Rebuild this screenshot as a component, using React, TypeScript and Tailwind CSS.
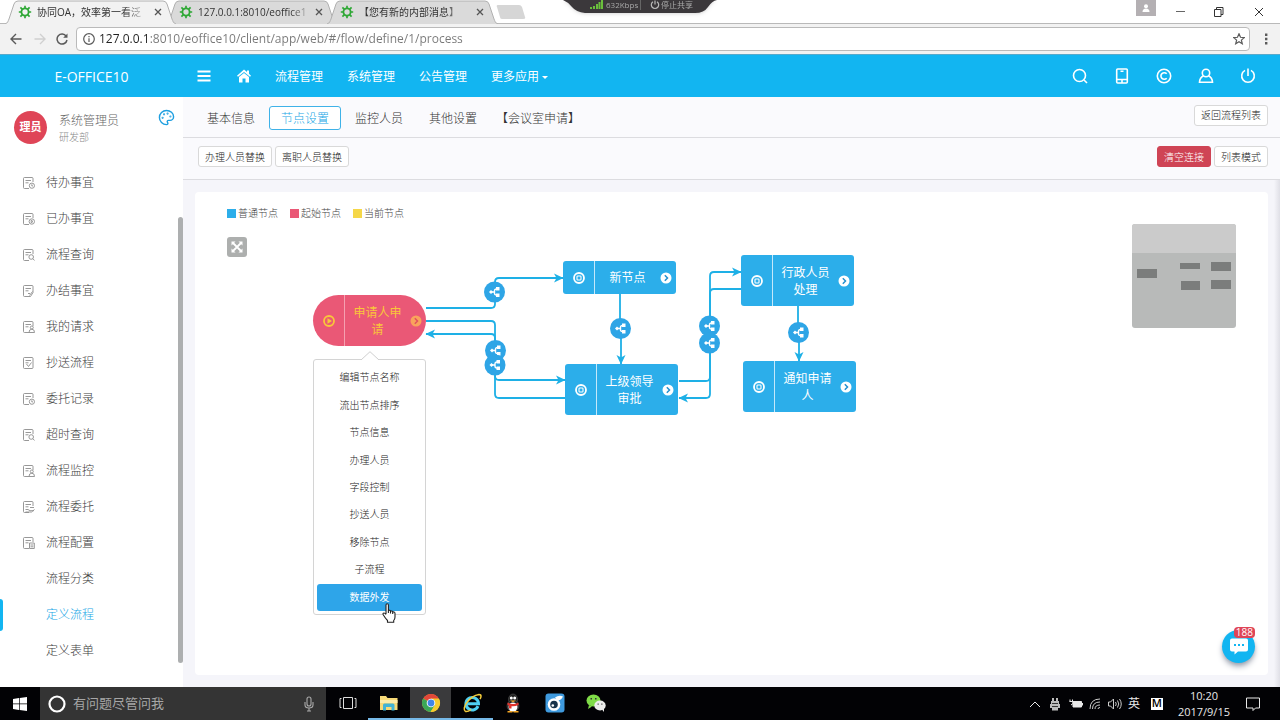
import type { ReactNode } from "react";
import { clsx } from "clsx";
import { Palette } from "lucide-react";

type SideItem = { label: string; mark?: Mark; active?: boolean };
type Mark = "clock" | "play" | "search" | "pen" | "user" | "check" | "hand" | "minus";

const sideItems: SideItem[] = [
  { label: "待办事宜", mark: "clock" },
  { label: "已办事宜", mark: "play" },
  { label: "流程查询", mark: "search" },
  { label: "办结事宜", mark: "pen" },
  { label: "我的请求", mark: "user" },
  { label: "抄送流程", mark: "check" },
  { label: "委托记录", mark: "clock" },
  { label: "超时查询", mark: "search" },
  { label: "流程监控", mark: "user" },
  { label: "流程委托", mark: "hand" },
  { label: "流程配置", mark: "minus" },
  { label: "流程分类" },
  { label: "定义流程", active: true },
  { label: "定义表单" },
];

const browserTabs = [
  { title: "协同OA，效率第一看泛", active: true },
  { title: "127.0.0.1:8010/eoffice1", active: false },
  { title: "【您有新的内部消息】", active: false },
];

const sections = ["基本信息", "节点设置", "监控人员", "其他设置"];

const legend = [
  { label: "普通节点", color: "bg-[#2caeea]" },
  { label: "起始节点", color: "bg-[#ea5876]" },
  { label: "当前节点", color: "bg-[#f5d748]" },
];

const menuItems = ["编辑节点名称", "流出节点排序", "节点信息", "办理人员", "字段控制", "抄送人员", "移除节点", "子流程", "数据外发"];

const nodes = [
  { lines: ["申请人申", "请"], place: "left-[118px] top-[103px] h-[51px]", start: true },
  { lines: ["新节点"], place: "left-[368px] top-[69px] h-[33px]" },
  { lines: ["行政人员", "处理"], place: "left-[546px] top-[63px] h-[51px]" },
  { lines: ["上级领导", "审批"], place: "left-[370px] top-[172px] h-[51px]" },
  { lines: ["通知申请", "人"], place: "left-[548px] top-[169px] h-[51px]" },
];

const edges = [
  "M231 116H296Q300 116 300 112V90Q300 86 304 86H368",
  "M231 129H296Q300 129 300 133V184Q300 188 304 188H370",
  "M370 206H304Q300 206 300 202V146Q300 142 296 142H231",
  "M425 102V136H426V172",
  "M484 189H511Q515 189 515 185V84Q515 80 519 80H546",
  "M546 97H519Q515 97 515 101V202Q515 206 511 206H484",
  "M603 114V140H604V169",
];

const joints = [
  [299.5, 100],
  [300.5, 158.5],
  [300, 173],
  [425.5, 136.5],
  [514.5, 134],
  [514.5, 151],
  [603.5, 140.5],
];

function Favicon() {
  return (
    <svg viewBox="0 0 14 14" className="size-3.5 shrink-0" fill="none" stroke="#2fa836">
      <circle cx="7" cy="7" r="3.6" strokeWidth="1.8" />
      <path
        d="M7 0.800v2.500M7 10.700v2.500M0.800 7h2.500M10.700 7h2.500M2.400 2.400l2 2M9.600 9.600l2 2M2.400 11.600l2-2M9.600 4.400l2-2"
        strokeWidth="1.7"
      />
    </svg>
  );
}

function BrowserTab({ title, active }: { title: string; active: boolean }) {
  return (
    <div className={clsx("relative -mr-2.5 flex h-6 w-[171px] items-center pl-[13px] pr-3.5", active && "z-10")}>
      <svg viewBox="0 0 171 24" preserveAspectRatio="none" className="absolute inset-0 size-full">
        <path d="M0 24C3 23 3 21 4 19L9 4Q10 1 13 1H158Q161 1 162 4L167 19C168 21 168 23 171 24" fill={active ? "#f2f2f2" : "#dadada"} stroke="#b0b0b0" />
      </svg>
      <div className="relative flex w-full items-center">
        <Favicon />
        <span className="ml-[5px] whitespace-nowrap text-[10px] leading-4 text-[#333] [mask-image:linear-gradient(to_right,#000_86%,#0004)]">
          {title}
        </span>
        <button type="button" aria-label="关闭标签页" className="ml-auto">
          <svg viewBox="0 0 8 8" className="size-2" stroke="#555" strokeWidth="1.3">
            <path d="M1 1l6 6M7 1l-6 6" />
          </svg>
        </button>
      </div>
    </div>
  );
}

function ShareBar() {
  return (
    <div className="absolute left-[563px] top-0 z-20 h-[14px] w-[154px] text-[#a8a8a8] drop-shadow">
      <svg viewBox="0 0 154 14" className="absolute inset-0 size-full">
        <path d="M0 0Q5 2 9 7T22 13H132Q141 13 145 7T154 0Z" fill="#3b383b" />
      </svg>
      <div className="relative flex h-2.5 items-center pl-[27px] text-[8px] leading-[10px]">
        <svg viewBox="0 0 13 10" className="h-2.5 w-[13px]" fill="#6abf3c">
          <path d="M0 7h2v2H0zM3 6h2v3H3zM6 4h2v5H6zM8.500 2h2v7h-2zM11 0h2v9h-2z" />
        </svg>
        <span className="ml-[3px] w-[34px]">632Kbps</span>
        <span className="h-2.5 w-2.5 border-l border-[#666]" />
        <svg viewBox="0 0 10 10" className="size-2.5" fill="none" stroke="#bbb" strokeWidth="1.2">
          <path d="M5 0.500v4M3 1.700a3.700 3.700 0 1 0 4 0" />
        </svg>
        <button type="button" className="ml-px whitespace-nowrap">停止共享</button>
      </div>
    </div>
  );
}

function BrowserChrome() {
  return (
    <div className="relative bg-white">
      <div className="flex h-6 border-b border-[#b9b9b9] pl-[5px]">
        {browserTabs.map((t) => (
          <BrowserTab key={t.title} {...t} />
        ))}
        <button type="button" aria-label="新标签页" className="ml-2 self-center">
          <svg viewBox="0 0 30 14" className="h-3.5 w-[30px]">
            <path d="M1 2Q0 0 2 0H23Q25 0 26 2L29 12Q30 14 27 14H6Q4 14 4 12Z" fill="#d6d6d6" />
          </svg>
        </button>
        <div className="ml-auto flex items-start pr-4 text-[#333]">
          <button type="button" aria-label="用户" className="flex h-4 w-5 items-center justify-center bg-[#b4b0b3]">
            <svg viewBox="0 0 8 8" className="size-2" fill="#fff">
              <circle cx="4" cy="2.200" r="2" />
              <path d="M0.500 8q0-3.500 3.500-3.500T7.500 8z" />
            </svg>
          </button>
          <button type="button" aria-label="最小化" className="ml-5 mt-[11px] h-px w-[9px] bg-[#666]" />
          <button type="button" aria-label="还原" className="ml-[29px] mt-[7px]">
            <svg viewBox="0 0 10 10" className="size-2.5" fill="none" stroke="currentColor">
              <path d="M0.500 2.500h6.500v7H0.500zM2.500 2.500v-2h6.500v7H7" />
            </svg>
          </button>
          <button type="button" aria-label="关闭" className="ml-[30px] mt-[7px]">
            <svg viewBox="0 0 10 10" className="size-2.5" stroke="currentColor">
              <path d="M1 1l8 8M9 1l-8 8" />
            </svg>
          </button>
        </div>
      </div>
      <div className="flex h-[30px] items-center bg-[#f2f2f2] pl-2.5 pr-3 text-[#5a5a5a]">
        <button type="button" aria-label="后退">
          <svg viewBox="0 0 12 12" className="size-3" fill="none" stroke="currentColor" strokeWidth="1.4">
            <path d="M11.500 6H1M6 1L1 6l5 5" />
          </svg>
        </button>
        <button type="button" aria-label="前进" className="ml-3 text-[#d0d0d0]">
          <svg viewBox="0 0 12 12" className="size-3" fill="none" stroke="currentColor" strokeWidth="1.4">
            <path d="M0.500 6H11M6 1l5 5-5 5" />
          </svg>
        </button>
        <button type="button" aria-label="刷新" className="ml-2.5">
          <svg viewBox="0 0 12 12" className="size-3" fill="none" stroke="currentColor" strokeWidth="1.5">
            <path d="M10.200 3.200A5 5 0 1 0 11 7" />
            <path d="M11.500 0.500v4.300H7.200z" fill="currentColor" stroke="none" />
          </svg>
        </button>
        <div className="ml-2 flex h-6 flex-1 items-center rounded-sm border border-[#bababa] bg-white pl-1.5 pr-1">
          <svg viewBox="0 0 12 12" className="size-3" fill="none" stroke="currentColor" strokeWidth="1.2">
            <circle cx="6" cy="6" r="5.300" />
            <path d="M6 5.300V9M6 3v1.300" />
          </svg>
          <input
            type="text"
            aria-label="地址栏"
            defaultValue="127.0.0.1:8010/eoffice10/client/app/web/#/flow/define/1/process"
            className="ml-1 flex-1 bg-[linear-gradient(to_right,#222_51px,#777_51px)] bg-clip-text text-[12px] leading-4 text-transparent outline-none"
          />
          <button type="button" aria-label="收藏">
            <svg viewBox="0 0 12 12" className="size-3" fill="none" stroke="currentColor" strokeWidth="1.2">
              <path d="M6 0.800l1.500 3.500 3.800 0.300-2.900 2.500 0.900 3.700L6 8.800l-3.300 2 0.900-3.700L0.700 4.600l3.800-0.300z" />
            </svg>
          </button>
        </div>
        <button type="button" aria-label="菜单" className="ml-3.5">
          <svg viewBox="0 0 4 12" className="h-3 w-1" fill="currentColor">
            <path d="M1 0.500h2.400v2.400H1zM1 4.800h2.400v2.400H1zM1 9.100h2.400v2.400H1z" />
          </svg>
        </button>
      </div>
      <ShareBar />
    </div>
  );
}

function TopIcon({ label, children }: { label: string; children: ReactNode }) {
  return (
    <button type="button" aria-label={label} className="flex w-[42px] justify-center">
      <svg viewBox="0 0 16 16" className="size-4" fill="none" stroke="currentColor" strokeWidth="1.6">
        {children}
      </svg>
    </button>
  );
}

function TopBar() {
  return (
    <header className="flex h-[43px] items-center border-t border-[#58a9cb] bg-[#12b5f1] pr-[11px] text-white">
      <div className="w-[183px] text-center text-[14px]">E-OFFICE10</div>
      <button type="button" aria-label="折叠菜单" className="ml-3.5">
        <svg viewBox="0 0 14 12" className="h-3 w-3.5" fill="currentColor">
          <path d="M0.500 0.500h13v2H0.500zM0.500 5h13v2H0.500zM0.500 9.500h13v2H0.500z" />
        </svg>
      </button>
      <a href="#home" aria-label="首页" className="ml-[26px]">
        <svg viewBox="0 0 14 14" className="size-3.5" fill="currentColor">
          <path d="M7 0.500L10 3V1.500h2v3.200l2 2-1 1L7 2.900 1 7.700l-1-1zM7 4l5 4v5.500H8.500V9.500h-3v4H2V8z" />
        </svg>
      </a>
      <nav className="ml-6 flex gap-6 pt-0.5 text-xs">
        <a href="#flow">流程管理</a>
        <a href="#system">系统管理</a>
        <a href="#notice">公告管理</a>
        <a href="#more" className="flex items-center gap-[3px]">
          更多应用
          <span className="border-x-[3px] border-t-[3px] border-x-transparent border-t-white" />
        </a>
      </nav>
      <div className="ml-auto flex">
        <TopIcon label="搜索">
          <circle cx="7.500" cy="7.500" r="6" />
          <path d="M12 12l3 3" />
        </TopIcon>
        <TopIcon label="手机">
          <path d="M2.700 2q0-1 1-1h8.600q1 0 1 1v12q0 1-1 1H3.700q-1 0-1-1zM2.700 11.500h10.600M6.500 3.300h3M8 12v2.500" />
        </TopIcon>
        <TopIcon label="版权">
          <circle cx="8" cy="8" r="6.700" />
          <path d="M10.700 5.800a3.300 3.300 0 1 0 0 4.400" />
        </TopIcon>
        <TopIcon label="用户">
          <circle cx="8" cy="5" r="3.700" />
          <path d="M5.500 7.800Q1.800 9.500 1.500 14.300h13Q14.200 9.500 10.500 7.800" />
        </TopIcon>
        <TopIcon label="退出">
          <path d="M8 0.500v7.500M5 2.400a6.300 6.300 0 1 0 6 0" />
        </TopIcon>
      </div>
    </header>
  );
}

function DocIcon({ mark }: { mark: Mark }) {
  return (
    <svg viewBox="0 0 12 12" className="size-3 shrink-0" fill="none" stroke="#8c8c8c" strokeWidth="0.9">
      <path d="M10 5V1.500q0-1-1-1H1.500q-1 0-1 1v9q0 1 1 1H6M2.500 3.500h5.500M2.500 5.800h3" />
      {mark === "clock" && <path d="M11.500 8.700a2.600 2.600 0 1 1-5.200 0 2.600 2.600 0 1 1 5.200 0M8.800 7.300v1.600H10" />}
      {mark === "play" && <path d="M11.500 8.500a2.700 2.700 0 1 1-5.400 0 2.700 2.700 0 1 1 5.400 0M8.200 7.200l1.800 1.300-1.800 1.300z" />}
      {mark === "search" && <path d="M10.500 8a2.300 2.300 0 1 1-4.600 0 2.300 2.300 0 1 1 4.600 0M9.800 9.700l1.800 1.800" />}
      {mark === "pen" && <path d="M10 5v2.500L7.500 11.500H6M9.500 6.500l-3 4M5 8.500h2" />}
      {mark === "user" && <path d="M10.300 6.500a1.500 1.500 0 1 1-3 0 1.500 1.500 0 1 1 3 0M6 11.500q0-3.300 2.800-3.300t2.700 3.300z" />}
      {mark === "check" && <path d="M6 11.500h3q1 0 1-1V5M3.500 7l2 2.500 3-4" />}
      {mark === "hand" && <path d="M2.500 8.500h2.500l2 1.200h4M2.500 11h6l3-2.500M7 6.500h4" />}
      {mark === "minus" && <path d="M6.500 6h4.800v5.500H6.500zM7.500 8h2.800M7.500 9.800h2.800" />}
    </svg>
  );
}

function Sidebar() {
  return (
    <aside className="relative w-[183px] shrink-0 bg-white">
      <div className="flex h-[68px] items-start px-3.5 pt-3.5">
        <span className="flex size-[33px] items-center justify-center rounded-full bg-[#df4557] text-[11px] font-bold text-white">
          理员
        </span>
        <div className="ml-3 text-[#666]">
          <div className="text-xs leading-5">系统管理员</div>
          <div className="text-[10px] leading-3 text-[#888]">研发部</div>
        </div>
        <button type="button" aria-label="主题" className="-mt-0.5 ml-auto -mr-1.5 text-[#1e9fe0]">
          <Palette className="size-[17px]" strokeWidth={2} />
        </button>
      </div>
      <nav>
        {sideItems.map((item) => (
          <a
            key={item.label}
            href="#flow"
            className={clsx("flex h-9 items-center text-xs", item.active ? "text-[#18a7e6]" : "text-[#404040]")}
          >
            <span className={clsx("mr-5 h-8 w-[3px] rounded-r-sm", item.active && "bg-[#12b5f1]")} />
            {item.mark ? <DocIcon mark={item.mark} /> : <span className="w-3" />}
            <span className="ml-[11px]">{item.label}</span>
          </a>
        ))}
      </nav>
      <div className="absolute right-0 bottom-6 top-[120px] w-[5px] rounded-full bg-[#adafb0]" />
    </aside>
  );
}

function SmallButton({ children, danger }: { children: ReactNode; danger?: boolean }) {
  return (
    <button
      type="button"
      className={clsx(
        "h-[21px] rounded-[3px] border px-1.5 text-[10px] leading-4",
        danger ? "border-[#cf4455] bg-[#cf4455] text-white" : "border-[#d9d9d9] bg-white text-[#222]",
      )}
    >
      {children}
    </button>
  );
}

function FlowNode({ lines, place, start }: { lines: string[]; place: string; start?: boolean }) {
  return (
    <div
      className={clsx(
        "absolute flex w-[113px] items-stretch text-xs font-normal leading-[17px]",
        place,
        start ? "rounded-full bg-[#ea5876] text-[#f9c63a]" : "rounded-[3px] bg-[#2caeea] text-white",
      )}
    >
      <span className={clsx("flex w-8 items-center justify-center border-r", start ? "border-[#f5a0b0]" : "border-[#c5e8fa]")}>
        <svg viewBox="0 0 12 12" className="size-3" fill="none" stroke="currentColor" strokeWidth="1.8">
          <circle cx="6" cy="6" r="5" />
          {start ? <path d="M4.500 3.300L9 6 4.500 8.700z" fill="currentColor" stroke="none" /> : <rect x="4" y="4" width="4" height="4" rx="0.800" strokeWidth="1.100" />}
        </svg>
      </span>
      <span className="flex flex-1 flex-col items-center justify-center whitespace-nowrap text-center">
        {lines.map((l) => (
          <span key={l}>{l}</span>
        ))}
      </span>
      <button type="button" aria-label="展开" className="mr-1 flex items-center">
        <svg viewBox="0 0 12 12" className="size-3">
          <circle cx="6" cy="6" r="5.500" fill={start ? "#f9a35c" : "#fff"} />
          <path d="M4.800 3.300L7.500 6 4.800 8.700" fill="none" stroke={start ? "#e2505f" : "#2390cf"} strokeWidth="1.500" />
        </svg>
      </button>
    </div>
  );
}

function Edges() {
  return (
    <svg className="absolute inset-0 size-full">
      <defs>
        <marker id="arrow" markerUnits="userSpaceOnUse" markerWidth="10" markerHeight="10" refX="9" refY="5" orient="auto">
          <path d="M0 0.500L9.500 5L0 9.500L2.500 5z" fill="#1eb0e6" />
        </marker>
      </defs>
      {edges.map((d) => (
        <path key={d} d={d} fill="none" stroke="#1eb0e6" strokeWidth="1.8" markerEnd="url(#arrow)" />
      ))}
      {joints.map(([x, y]) => (
        <g key={`${x}-${y}`} transform={`translate(${x} ${y})`}>
          <circle r="10.500" fill="#2ea5e6" />
          <path d="M-3 0H0M4 -3H2Q0 -3 0 -1V1Q0 3 2 3H4" fill="none" stroke="#fff" strokeWidth="1.400" />
          <path d="M-5.500 0L-3.500 -2L-1.500 0L-3.500 2zM1.500 -5H5V-1.500H1.500zM1.500 1.500H5V5H1.500z" fill="#fff" />
        </g>
      ))}
    </svg>
  );
}

function NodeMenu() {
  return (
    <div className="absolute left-[118px] top-[167px] flex h-64 w-[113px] flex-col rounded-[3px] border border-[#d4d4d4] bg-white px-[3px] pb-[3px] pt-1">
      <svg viewBox="0 0 18 9" className="absolute -top-[9px] left-[47px] h-[9px] w-[18px]" fill="#fff" stroke="#cfcfcf">
        <path d="M0 9L9 0.700L18 9" />
      </svg>
      {menuItems.map((m, i) => (
        <button
          key={m}
          type="button"
          className={clsx("flex-1 rounded-[3px] text-[10px]", i === menuItems.length - 1 ? "bg-[#2ea5e9] font-normal text-white" : "text-[#222]")}
        >
          {m}
        </button>
      ))}
      <svg viewBox="0 0 14 20" className="absolute bottom-[-9px] right-[29px] h-5 w-3.5" fill="#fff" stroke="#222" strokeWidth="1.100">
        <path d="M4 11V2Q4 0.700 5.200 0.700T6.400 2V7.500Q8.200 6.800 8.500 8.200Q10.300 7.500 10.700 8.900Q13 8.500 13 10.500V14Q13 16 11.700 17.500V19.200H5.500V17.500Q3.500 15.500 1.200 11.700Q0.500 10 2 10Q3 10 4 11.500M6.400 7.500V10M8.500 8.200V10.500M10.700 8.900V11" />
      </svg>
    </div>
  );
}

function MiniMap() {
  return (
    <svg viewBox="0 0 104 104" className="absolute right-8 top-8 size-[104px] rounded-[3px]">
      <path d="M0 0H104V104H0z" fill="#b8bab9" />
      <path d="M0 0H104V29H0z" fill="#cbcbcb" />
      <path d="M5 45h20v9H5zM48 39h20v6H48zM79 38h20v9H79zM49 57h19v9H49zM79 56h20v9H79z" fill="#7b7d7c" />
    </svg>
  );
}

function FlowCanvas() {
  return (
    <section className="relative m-3 min-h-[440px] flex-1 rounded-sm bg-white">
      <div className="flex gap-3 pl-8 pt-[13px] text-[10px] leading-4 text-[#444]">
        {legend.map((l) => (
          <span key={l.label} className="flex items-center gap-0.5">
            <span className={clsx("size-[9px]", l.color)} />
            {l.label}
          </span>
        ))}
      </div>
      <button type="button" aria-label="全屏" className="ml-8 mt-4 flex size-5 items-center justify-center rounded-[3px] bg-[#adafae]">
        <svg viewBox="0 0 12 12" className="size-3" fill="#fff" stroke="#fff" strokeWidth="1.800">
          <path d="M2 2l8 8M10 2l-8 8" />
          <path d="M0.500 0.500h4l-4 4zM11.500 0.500v4l-4-4zM0.500 11.500v-4l4 4zM11.500 11.500h-4l4-4z" stroke="none" />
        </svg>
      </button>
      <Edges />
      {nodes.map((n) => (
        <FlowNode key={n.lines[0]} {...n} />
      ))}
      <NodeMenu />
      <MiniMap />
      <button type="button" aria-label="消息" className="absolute bottom-3 right-[13px] flex size-[33px] items-center justify-center rounded-full bg-[#12b5f1] shadow-md shadow-gray-400">
        <svg viewBox="0 0 20 17" className="h-[17px] w-5" fill="#fff">
          <path d="M3 0.500H17Q19 0.500 19 2.500V11.500Q19 13.500 17 13.500H9L5.500 16.500V13.500H3Q1 13.500 1 11.500V2.500Q1 0.500 3 0.500z" />
          <path d="M5 6h2v2H5zM9 6h2v2H9zM13 6h2v2h-2z" fill="#12b5f1" />
        </svg>
        <span className="absolute right-0 -top-[3px] rounded-[4px] bg-[#df4557] px-0.5 text-[10px] font-normal leading-[11px] text-white">188</span>
      </button>
    </section>
  );
}

function Workspace() {
  return (
    <main className="flex min-w-0 flex-1 flex-col bg-[linear-gradient(to_left,#dfdfe6,#f5f5fa_6px)]">
      <div className="flex h-[41px] items-center border-b border-[#dcdce0] bg-[#fafafd] px-3">
        <nav className="flex gap-0.5 pt-0.5 text-xs text-[#333]">
          {sections.map((s) => (
            <a
              key={s}
              href="#section"
              className={clsx(
                "rounded-[3px] border px-[11px] pt-0.5 leading-5",
                s === "节点设置" ? "border-[#3fb2e8] bg-white text-[#18a7e6]" : "border-transparent",
              )}
            >
              {s}
            </a>
          ))}
          <span className="border border-transparent pl-1 pt-0.5 leading-5">【会议室申请】</span>
        </nav>
        <div className="mb-1 ml-auto flex">
          <SmallButton>返回流程列表</SmallButton>
        </div>
      </div>
      <div className="flex h-[42px] items-center gap-[3px] border-b border-[#dcdce0] bg-[#fafafd] pb-1 pl-[15px] pr-3">
        <SmallButton>办理人员替换</SmallButton>
        <SmallButton>离职人员替换</SmallButton>
        <div className="ml-auto flex gap-[3px]">
          <SmallButton danger>清空连接</SmallButton>
          <SmallButton>列表模式</SmallButton>
        </div>
      </div>
      <FlowCanvas />
    </main>
  );
}

function TaskApp({ label, running, focused, children }: { label: string; running?: boolean; focused?: boolean; children: ReactNode }) {
  return (
    <button
      type="button"
      aria-label={label}
      className={clsx("flex flex-1 items-center justify-center border-b-2", running ? "border-[#76b9e8]" : "border-transparent", focused && "bg-[#3a3a3c]")}
    >
      <svg viewBox="0 0 20 20" className="size-5" fill="none">
        {children}
      </svg>
    </button>
  );
}

function TaskBar() {
  return (
    <footer className="flex h-[33px] items-stretch bg-[#020205] text-white">
      <button type="button" aria-label="开始" className="flex w-10 items-center justify-center">
        <svg viewBox="0 0 14 14" className="size-3.5" fill="#fff">
          <path d="M0 2l6-0.900v5.500H0zM6.700 1L14 0v6.600H6.700zM0 7.300h6v5.600L0 12zM6.700 7.300H14V14l-7.300-1z" />
        </svg>
      </button>
      <div className="flex w-[286px] items-center bg-[#343434] pl-2 pr-3">
        <svg viewBox="0 0 18 18" className="size-[18px]" fill="none" stroke="#fff" strokeWidth="2.200">
          <circle cx="9" cy="9" r="7.500" />
        </svg>
        <input type="text" aria-label="搜索" placeholder="有问题尽管问我" className="ml-[7px] min-w-0 flex-1 bg-transparent text-[13px] placeholder:text-[#a6a6a6]" />
        <svg viewBox="0 0 10 16" className="h-4 w-2.5" fill="none" stroke="#aaa" strokeWidth="1.100">
          <rect x="3" y="1" width="4" height="9" rx="2" />
          <path d="M1 6v3q0 3 4 3t4-3V6M5 12v3M3 15h4" />
        </svg>
      </div>
      <div className="flex w-[291px] pl-px">
        <TaskApp label="任务视图">
          <path d="M5.500 4.500h9v11h-9zM3.500 5.500h-1.500v9h1.500M16.500 5.500H18v9h-1.500" stroke="#ddd" />
        </TaskApp>
        <TaskApp label="文件资源管理器" running>
          <path d="M1 3h6l1.500 2H18.500V17H1z" fill="#f6d978" />
          <path d="M1 7h17.500v3H1z" fill="#fdeba8" />
          <path d="M4 17.500V12q0-1.500 1.500-1.500h8.500q1.500 0 1.500 1.500v5.500H12.500V14h-5.500v3.500z" fill="#42b3d5" />
        </TaskApp>
        <TaskApp label="Chrome" running focused>
          <circle cx="10" cy="10" r="9" fill="#f5c928" />
          <path d="M10 10L2.200 5.500A9 9 0 0 1 17.800 5.500H10z" fill="#e2473a" />
          <path d="M10 10L2.200 5.500A9 9 0 0 0 9.500 19L14 12z" fill="#3ba757" />
          <path d="M10 10L17.800 5.500A9 9 0 0 1 9.500 19L14 12z" fill="#f7cb30" />
          <circle cx="10" cy="10" r="4.300" fill="#fff" />
          <circle cx="10" cy="10" r="3.400" fill="#4285e8" />
        </TaskApp>
        <TaskApp label="Internet Explorer" running>
          <path d="M16 13.200A6.300 6.300 0 1 1 16.500 10.700H5" stroke="#4fd0f2" strokeWidth="3" />
          <path d="M3.500 18.500C-1 16 7 3 17 1.500C20 1.500 19 4.500 18 6M3.500 18.500Q6 19 9 16.500" stroke="#f4cc3c" strokeWidth="1.500" />
        </TaskApp>
        <TaskApp label="QQ">
          <ellipse cx="10" cy="6.500" rx="4.500" ry="5.500" fill="#222" stroke="#666" strokeWidth="0.500" />
          <ellipse cx="10" cy="13" rx="6" ry="5.500" fill="#222" stroke="#666" strokeWidth="0.500" />
          <ellipse cx="10" cy="14" rx="4.500" ry="4.500" fill="#fff" />
          <circle cx="8.300" cy="5" r="1.500" fill="#fff" />
          <circle cx="11.700" cy="5" r="1.500" fill="#fff" />
          <path d="M7 7.500h6L10 9.300z" fill="#f5a623" />
          <path d="M4.500 9.500Q10 12.500 15.500 9.500V12Q10 14.500 4.500 12zM6 12h2.500v3.500H6z" fill="#e1332d" />
          <path d="M4.500 18h5v1.500h-5zM10.500 18h5v1.500h-5z" fill="#f5a623" />
        </TaskApp>
        <TaskApp label="微博">
          <rect x="0.500" y="0.500" width="19" height="19" rx="3" fill="#3f9ade" />
          <circle cx="9" cy="11.500" r="6.300" fill="#fff" />
          <circle cx="9" cy="11.500" r="3.800" fill="#16324a" />
          <circle cx="7.800" cy="12.500" r="1.300" fill="#fff" />
          <path d="M10 4.500Q14 1.500 18 3.500Q16 8 12 7z" fill="#fff" />
        </TaskApp>
        <TaskApp label="微信">
          <ellipse cx="7.500" cy="7.500" rx="7" ry="6" fill="#7fdb48" />
          <path d="M3 12l-1 4 4-2.500z" fill="#7fdb48" />
          <ellipse cx="14" cy="12.500" rx="5.700" ry="5" fill="#ececec" />
          <path d="M16 16.500l2 2.500v-4z" fill="#ececec" />
          <path d="M4.500 5h1.500v1.500H4.500zM9 5h1.500v1.500H9z" fill="#333" />
          <path d="M11.500 10.500h1.300v1.300h-1.300zM15.200 10.500h1.300v1.300h-1.300z" fill="#555" />
        </TaskApp>
      </div>
      <div className="ml-auto flex items-center pr-5 text-[#e8e8e8]">
        <svg viewBox="0 0 12 8" className="h-2 w-3" fill="none" stroke="currentColor">
          <path d="M1 7l5-5 5 5" />
        </svg>
        <svg viewBox="0 0 12 14" className="ml-2 h-3.5 w-3" fill="#bbb">
          <path d="M3 1h2v3H3zM7 1h2v3H7zM2 4h8v3H2zM1 7h10v4H1zM3 11h6v2.500H3z" />
          <path d="M3 6h6v1H3zM3 9h6v1H3z" fill="#333" />
        </svg>
        <svg viewBox="0 0 14 10" className="ml-2 h-2.5 w-3.5" fill="none" stroke="currentColor">
          <path d="M4 2.500h8.500v5.500H4z" fill="currentColor" />
          <path d="M13.500 4v2.500M1 0.500v2M3.500 0.500v2M0.500 2.500h3.500v2l-2 1.500" />
        </svg>
        <svg viewBox="0 0 12 12" className="ml-1.5 size-3" fill="none" stroke="#ccc">
          <path d="M1 11Q1 1 11 1M3.500 11Q3.500 4 11 4M6 11Q6 7 11 7M9 11q0-1.500 2-1.500" />
        </svg>
        <svg viewBox="0 0 14 12" className="ml-[7px] h-3 w-3.5" fill="none" stroke="#ccc">
          <path d="M0.500 4h2l3-3v10l-3-3h-2zM7.500 4q1.500 2 0 4M9.500 2.500q2.500 3.500 0 7M11.500 1q3.500 5 0 10" />
        </svg>
        <span className="ml-1.5 text-xs">英</span>
        <span className="ml-[11px] flex size-3 items-center justify-center bg-white text-[11px] font-semibold text-black">M</span>
        <div className="ml-[15px] text-center text-[11px] leading-4">
          <div>10:20</div>
          <div>2017/9/15</div>
        </div>
        <svg viewBox="0 0 14 14" className="ml-4 size-3.5" fill="none" stroke="currentColor">
          <path d="M0.500 1h13v10h-4L7 13.500V11H0.500z" />
        </svg>
      </div>
    </footer>
  );
}

export default function App() {
  return (
    <div className="flex min-h-screen flex-col font-['Open_Sans','Noto_Sans_CJK_SC',sans-serif]">
      <BrowserChrome />
      <TopBar />
      <div className="flex flex-1 items-stretch font-light">
        <Sidebar />
        <Workspace />
      </div>
      <TaskBar />
    </div>
  );
}
